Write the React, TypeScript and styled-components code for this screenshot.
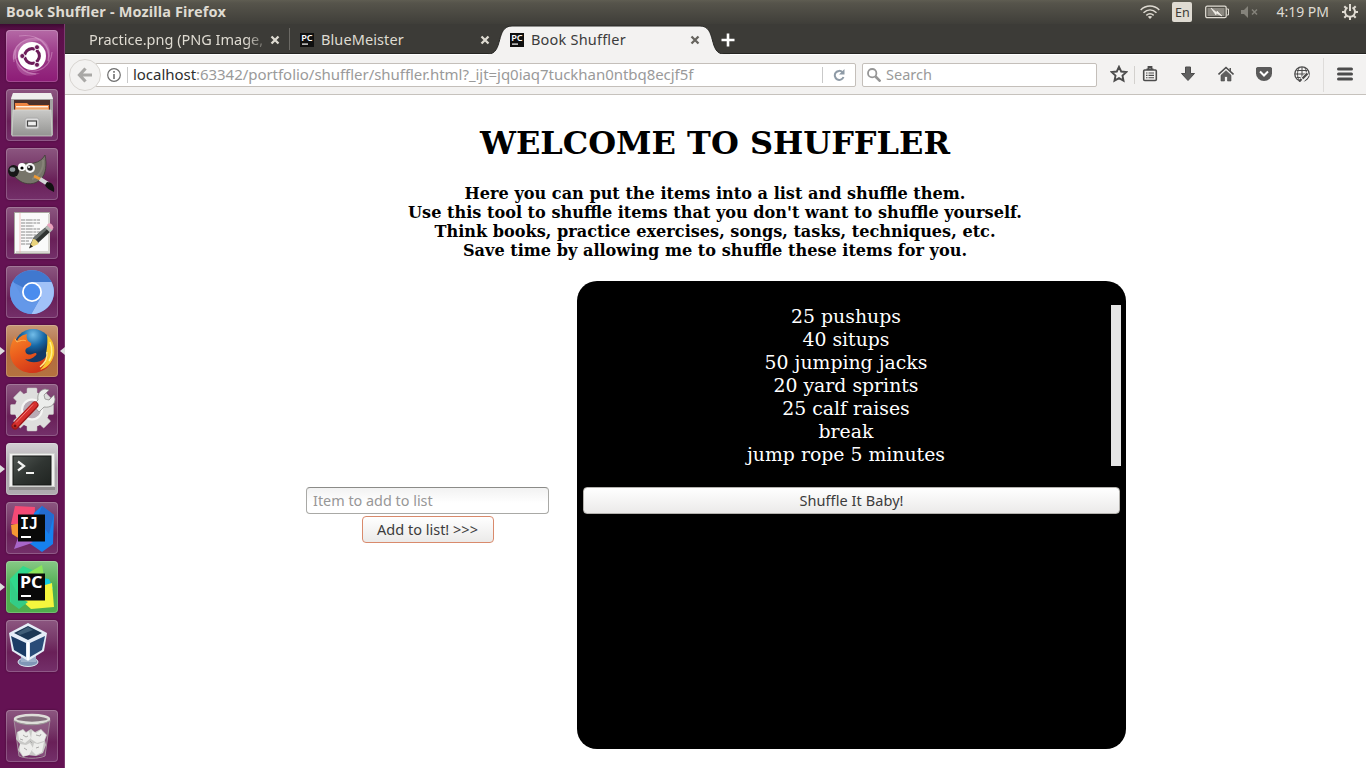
import React from 'react';
import styled, { createGlobalStyle } from 'styled-components';

const GlobalStyle = createGlobalStyle`
  * { box-sizing: border-box; }
  html, body { margin: 0; padding: 0; }
  body { width: 1366px; height: 768px; overflow: hidden; background: #fff; }
  svg { display: block; flex: none; }
`;

const uiFont = `'Noto Sans', 'Open Sans', sans-serif`;

const Desktop = styled.div`
  display: flex;
  flex-direction: column;
  width: 1366px;
  height: 768px;
  font-family: ${uiFont};
`;

const Label = styled.span<{ $size?: number; $spacing?: number }>`
  font-size: ${p => p.$size ?? 14.5}px;
  letter-spacing: ${p => p.$spacing ?? 0}px;
  white-space: nowrap;
`;

/* ---------- top panel ---------- */

const TopPanel = styled.header`
  display: flex;
  align-items: center;
  justify-content: space-between;
  flex: none;
  height: 24px;
  padding: 0 8px 0 6px;
  color: #dfdbd2;
  background: linear-gradient(#5f5d52 0, #56544b 3px, #3f3e39 24px);
`;

const WindowTitle = styled(Label)`
  margin-bottom: 2px;
  font-weight: 700;
  line-height: 22px;
`;

const Indicators = styled.div`
  display: flex;
  align-items: center;
  height: 24px;
`;

const Language = styled.div`
  width: 20px;
  height: 20px;
  margin: 0 13px 0 12px;
  border-radius: 2px;
  background: #dfdbd2;
  color: #3c3b37;
  font-size: 12.5px;
  line-height: 21px;
  text-align: center;
`;

const Clock = styled(Label)`
  margin: 0 13px 0 17px;
  line-height: 24px;
`;

/* ---------- launcher ---------- */

const Workspace = styled.div`
  display: flex;
  flex: 1;
  min-height: 0;
`;

const Launcher = styled.nav`
  display: flex;
  flex-direction: column;
  gap: 7px;
  flex: none;
  width: 65px;
  padding: 6px 7px 6px 6px;
  background: linear-gradient(#3d0932 0, #5c0f4a 6px, #641253 60px, #641253 100%);
  border-right: 1px solid #7d3b70;
`;

const Tile = styled.div<{ $bg?: string; $last?: boolean }>`
  position: relative;
  width: 52px;
  height: 52px;
  margin-top: ${p => (p.$last ? 'auto' : '0')};
  border-radius: 4px;
  background: ${p => p.$bg ?? 'linear-gradient(#8c5680 0, #763768 40%, #692058 62%, #74306a 100%)'};
  box-shadow: inset 0 0 0 1px rgba(255, 255, 255, 0.2), 0 0 2px rgba(30, 0, 20, 0.5);
`;

const Pip = styled.i<{ $right?: boolean }>`
  position: absolute;
  top: 22px;
  ${p => (p.$right ? 'right: -7px; border-right: 5px solid #dedede;' : 'left: -6px; border-left: 5px solid #dedede;')}
  border-top: 4px solid transparent;
  border-bottom: 4px solid transparent;
`;

const Icon52 = ({ children }: { children: React.ReactNode }) => (
  <svg width="52" height="52" viewBox="0 0 52 52">{children}</svg>
);

const monoText = { fontFamily: "'DejaVu Sans Mono', monospace", fontWeight: 700 } as const;

const DashIcon = () => (
  <Icon52>
    <g fill="none" stroke="#e9b9dd" strokeWidth="1.2" opacity=".4">
      <path d="M8 32C5 15 20 5 35 10M13 6C32 3 46 15 42 31M46 22c-1 14-13 22-25 18M10 19c-4 14 8 25 20 25" />
    </g>
    <path d="M7 30C5 15 19 5 36 11 24 9 14 16 13 27zM28 7c13 1 20 14 14 26 1-12-2-19-14-26zM10 28c3 10 12 16 24 15C20 50 9 43 10 28z" fill="#f1c4e6" opacity=".25" />
    <circle cx="26" cy="26" r="14" fill="#fff" />
    <circle cx="26" cy="26" r="7.3" fill="none" stroke="#6c1b59" strokeWidth="3.2" />
    <g stroke="#fff" strokeWidth="1.5"><path d="M26 26l5 9M26 26l5-9M26 26H15" /></g>
    <circle cx="26" cy="26" r="5.6" fill="#fff" />
    <g fill="#6c1b59" stroke="#fff" strokeWidth=".8"><circle cx="16.3" cy="26" r="2.5" /><circle cx="31" cy="17.2" r="2.5" /><circle cx="31" cy="34.8" r="2.5" /></g>
  </Icon52>
);

const FilesIcon = () => (
  <Icon52>
    <defs><linearGradient id="fl" x2="0" y2="1"><stop stopColor="#c9c9c7" /><stop offset="1" stopColor="#949492" /></linearGradient></defs>
    <path d="M7 4h38l2 5v37H5V9z" fill="#a5a5a3" />
    <path d="M7 4h38l2 6H5z" fill="#efefed" />
    <path d="M8 11h36v12H8z" fill="#4b302b" />
    <path d="M9 14h12l2 2h20v7H9z" fill="#ef8541" /><path d="M10 17h32v1.5H10z" fill="#fff2e2" /><path d="M10 19.5h32v1.2H10z" fill="#f3c38e" />
    <path d="M7 21h38l1 26H6z" fill="url(#fl)" stroke="#d8d8d6" strokeWidth=".7" />
    <rect x="19" y="29" width="14" height="11" rx="2" fill="#ddd" stroke="#aaa" />
    <rect x="21.5" y="32" width="9" height="5" fill="#eee" stroke="#444" strokeWidth="1.2" />
  </Icon52>
);

const GimpIcon = () => (
  <Icon52>
    <path d="M6 21c5 0 7-3 10-5 6-2 9 0 12-1 5-1 9-4 11-8 2 9 1 19-4 24-6 6-15 6-21 2-3-2-5-4-8-7z" fill="#77756a" stroke="#3f3d36" strokeWidth=".8" />
    <path d="M37 12c1 8-3 16-11 19" stroke="#969486" strokeWidth="2" fill="none" opacity=".5" />
    <ellipse cx="7.500" cy="23" rx="5.500" ry="6" fill="#171717" /><ellipse cx="6.500" cy="21.500" rx="2.800" ry="2.300" fill="#8c969a" />
    <circle cx="16" cy="19" r="4" fill="#fff" /><circle cx="16" cy="20" r="1.600" /><circle cx="24" cy="20" r="5" fill="#f4f4f4" /><circle cx="24" cy="20" r="2.800" fill="#222" /><circle cx="23" cy="19" r="1" fill="#fff" />
    <path d="M28 28l10 5" stroke="#ed9a35" strokeWidth="2.600" /><path d="M34 31l8 5" stroke="#d4d6d7" strokeWidth="4" />
    <path d="M41 34c5 0 8 4 7 10-4-2-8-4-9-7z" fill="#111" />
  </Icon52>
);

const EditorIcon = () => (
  <Icon52>
    <path d="M8.500 5.500h35v41h-35z" fill="#fafafa" stroke="#a8a69f" strokeWidth="1" />
    <path d="M10 45h33V7" fill="none" stroke="#d8d7d2" strokeWidth="2" />
    <path d="M14 6v40" stroke="#eeb0b0" strokeWidth=".7" />
    <path d="M15 13h19M15 16h19M15 19h13M15 22h19M15 25h19M15 28h17M15 31h12M15 34h8M15 37h13" stroke="#8a8a8a" strokeWidth="1.2" strokeDasharray="4 .7 7 .7 3 .7" />
    <path d="M24 38l4-8 13-11 4 5-13 12z" fill="#303432" /><path d="M27 31l14-12 2 1.600L28.500 34z" fill="#6d7371" />
    <path d="M23.500 41l3.500-9c2 0 5 2 5.500 5z" fill="#e9d37c" /><path d="M23 41.500l1.500-4 2.500 2z" fill="#222" />
    <path d="M39 20.500l3-3 5 5-3 3z" fill="#b6b9b5" /><path d="M41 18c3-4 6 0 6.500 3l-2 2z" fill="#eaa2bd" />
  </Icon52>
);

const ChromiumIcon = () => (
  <Icon52>
    <circle cx="26" cy="26" r="22" fill="#6094e4" />
    <path d="M26 26L6.500 16A22 22 0 0 1 45.500 16z" fill="#4078cf" />
    <path d="M26 16h19.500a22 22 0 0 1-20 32l9.500-17z" fill="#a1c2f8" />
    <path d="M7 15l10 17a10 10 0 0 0 17.500 0L25 48A22 22 0 0 1 7 15z" fill="#6498e9" />
    <circle cx="26" cy="26" r="10" fill="#fff" /><circle cx="26" cy="26" r="8.200" fill="#4a8cee" />
  </Icon52>
);

const FirefoxIcon = () => (
  <Icon52>
    <defs>
      <radialGradient id="gl" cx=".5" cy=".15"><stop stopColor="#72bde9" /><stop offset=".6" stopColor="#1667a5" /><stop offset="1" stopColor="#123966" /></radialGradient>
      <linearGradient id="fx" x2=".6" y2="1"><stop stopColor="#f78c2a" /><stop offset=".5" stopColor="#ea5b1c" /><stop offset="1" stopColor="#cf3319" /></linearGradient>
    </defs>
    <circle cx="27" cy="23" r="19" fill="url(#gl)" />
    <path d="M43 14c4 5 6 10 5 15-1 11-10 19-22 19-12 0-22-9-22-21 0-6 2-10 4-14l1-2c0 3 1 4 2 5 2-4 5-6 10-7-1 3 0 5 1 7l3 2c1 2-1 4-4 5-2 1-2 3-1 5 3 3 6 1 9 0 2 0 2 2 0 3-3 3-7 4-10 3 5 5 15 4 20-1 4-6 5-13 4-19z" fill="url(#fx)" />
    <path d="M41 10c7 6 8 13 7 20-2 8-7 13-14 15 6-6 8-12 8-18l-2 3c1-8 2-13 1-20z" fill="#f9c92f" />
    <path d="M44 17c3 7 2 15-1 19M41 27c1 7-3 12-7 15" stroke="#fff18b" strokeWidth="1.500" fill="none" />
    <path d="M9 14l2 3c4-2 8-2 9-1" fill="none" stroke="#ffbb5a" strokeWidth="1" />
  </Icon52>
);

const SettingsIcon = () => (
  <Icon52>
    <g fill="#dededd" stroke="#c4c4c2" strokeWidth=".5">
      {[0, 45, 90, 135].map(a => <rect key={a} x="21" y="4" width="10" height="43" rx="1" transform={`rotate(${a} 26 25.500)`} />)}
      <circle cx="26" cy="25.500" r="17.500" stroke="none" />
    </g>
    <circle cx="26" cy="25.500" r="9" fill="#b9abb5" /><circle cx="26" cy="25.500" r="10" fill="none" stroke="#f5f5f4" strokeWidth="2" />
    <path d="M27 21l5-5c-1-6 2-10 7-11l4 1-5 5 1 4 4 1 5-5 1 4c0 6-5 9-11 8l-5 5z" fill="#ecedeb" stroke="#8e8e8b" strokeWidth=".8" />
    <path d="M9 42L29 21" stroke="#9f1717" strokeWidth="7" strokeLinecap="round" /><path d="M9 41.500L29 20.500" stroke="#d6302e" strokeWidth="5" strokeLinecap="round" /><path d="M10 38.500L27 20.500" stroke="#f0827c" strokeWidth="1" />
    <circle cx="9" cy="42" r="1.500" fill="#6b1010" />
  </Icon52>
);

const TerminalIcon = () => (
  <Icon52>
    <defs><linearGradient id="tm" x2="1" y2="1"><stop stopColor="#505652" /><stop offset=".5" stopColor="#303532" /><stop offset="1" stopColor="#202421" /></linearGradient></defs>
    <path d="M3 10h46v34H3z" fill="#d0d1cf" /><path d="M4 11h44v32H4z" fill="#f1f1ef" /><path d="M3 44h46v3H3z" fill="#8e8b8c" />
    <rect x="7" y="13" width="38" height="29" fill="url(#tm)" stroke="#171917" />
    <path d="M12 18.500l6 4.500-6 4.500M20 30h8" fill="none" stroke="#f3f3f2" strokeWidth="2.200" />
  </Icon52>
);

const IntelliJIcon = () => (
  <Icon52>
    <path d="M9 4l20 1-1 20-23-3z" fill="#f54a75" /><path d="M5 23l10-2 2 18-11-7z" fill="#f69833" />
    <path d="M28 11l8-7 12 9-1 29-11 8-13-9z" fill="#1681ee" /><path d="M36 4l12 9-5 19-12-15z" fill="#246bd0" />
    <path d="M8 47l5-14 14 7-4 2z" fill="#a866c9" />
    <path d="M12 12.500h27v27H12z" fill="#090909" />
    <text x="14" y="27" fill="#fff" fontSize="15.500" textLength="18" lengthAdjust="spacingAndGlyphs" style={monoText}>IJ</text><path d="M15 34h10v2H15z" fill="#fff" />
  </Icon52>
);

const PyCharmIcon = () => (
  <Icon52>
    <path d="M4 18L17 5l16 7-12 28-9 6-8-5z" fill="#30d98c" /><path d="M22 12L36 4l4 22-20 7z" fill="#8ce65a" />
    <path d="M36 17l7 1 4 9-6 8z" fill="#15c9df" /><path d="M39 24l7-2 2 24-23 2-9-8z" fill="#f5f63e" /><path d="M4 19l10 18 8 4-9 7-8-6z" fill="#33cc85" />
    <path d="M12 12.500h27v27H12z" fill="#090909" />
    <text x="14" y="27" fill="#fff" fontSize="16" textLength="22.500" lengthAdjust="spacingAndGlyphs" style={{ fontFamily: uiFont, fontWeight: 700 }}>PC</text><path d="M15 34h10v2H15z" fill="#fff" />
  </Icon52>
);

const VirtualBoxIcon = () => (
  <Icon52>
    <ellipse cx="22" cy="42" rx="10" ry="4.500" fill="#8096b7" stroke="#dce5ef" /><path d="M15 34h15v8H15z" fill="#9eb0ca" />
    <path d="M3 13L22 3l19 10-3 18-16 10L6 31z" fill="#e4edf7" /><path d="M8 13l14-7 14 7-14 7z" fill="#1b3855" />
    <path d="M5 16l15 7v14L8 30z" fill="#1b3c65" /><path d="M24 23l15-7-3 14-12 7z" fill="#294c78" /><path d="M11 13l11-6 5 3-13 5z" fill="#537288" opacity=".65" /><path d="M22 22v18" stroke="#fff" strokeWidth="2" />
  </Icon52>
);

const TrashIcon = () => (
  <Icon52>
    <path d="M8 10h36l-5 36H13z" fill="#c7b8c2" opacity=".25" />
    <path d="M8 10l5 36c7 3 19 3 26 0l5-36" fill="none" stroke="#a48e9d" strokeWidth="1" />
    <path d="M11 22l6-3 3 3 5-3 4 3 6-3 6 6-2 5 1 5-3 8-7 3-7-1-6 2-5-7 2-6-4-5z" fill="#c9c9c7" />
    <g fill="#ededeb">
      <path d="M12 22l5-2 3 3 3-2 2 7-6 5-6-3zM26 21l4 2 5-3 5 5-2 6-7 2-6-4zM14 34l6 1 4-2 3 5-4 7-6 1-3-5zM28 33l4 1 6-2-2 10-6 3-4-4z" />
    </g>
    <path d="M17 25l3 2 2-1M30 25l4 1 1-2M18 38l3 2M30 38l3-1M24 31l2 2M14 29l3 1" stroke="#aaa9a8" fill="none" />
    <ellipse cx="26" cy="9" rx="17" ry="4" fill="#84707d" stroke="#deded9" strokeWidth="2.500" /><path d="M9 11c7 5 27 5 34 0" stroke="#9b9b97" fill="none" />
  </Icon52>
);

/* ---------- browser window ---------- */

const Browser = styled.main`
  display: flex;
  flex-direction: column;
  flex: 1;
  min-width: 0;
`;

const TabStrip = styled.div`
  position: relative;
  display: flex;
  align-items: center;
  flex: none;
  height: 30px;
  background: #3c3b37;
  border-bottom: 1px solid #252522;
`;

const Tab = styled.div<{ $active?: boolean; $width: number; $pad: number }>`
  position: relative;
  display: flex;
  align-items: center;
  justify-content: space-between;
  width: ${p => p.$width}px;
  height: 30px;
  padding: 2px 9px 0 ${p => p.$pad}px;
  color: ${p => (p.$active ? '#3c3c3c' : '#dfdbd2')};
`;

const TabShape = styled.svg`
  position: absolute;
  left: -11px;
  top: 1px;
`;

const TabTitle = styled(Label)<{ $fade?: boolean; $grow?: boolean }>`
  position: relative;
  flex: ${p => (p.$grow ? 1 : 'none')};
  margin-bottom: 2px;
  line-height: 22px;
  ${p => p.$fade && 'mask-image: linear-gradient(90deg, #000 90%, rgba(0, 0, 0, 0.3) 100%);'}
`;

const Divider = styled.i<{ $h: number; $color: string; $gap?: number }>`
  flex: none;
  width: 1px;
  height: ${p => p.$h}px;
  margin-left: ${p => p.$gap ?? 0}px;
  background: ${p => p.$color};
`;

const FaviconArt = styled.svg`
  position: relative;
  margin-right: 7px;
`;

const Favicon = () => (
  <FaviconArt width="14" height="14" viewBox="0 0 14 14">
    <path d="M0 0h14v14H0z" fill="#101010" />
    <text x="1.200" y="7.500" fill="#fff" fontSize="8.500" textLength="11.500" lengthAdjust="spacingAndGlyphs" style={{ fontFamily: uiFont, fontWeight: 600 }}>PC</text>
    <path d="M2 10.500h6v1.200H2z" fill="#fff" />
  </FaviconArt>
);

const CloseArt = styled.svg`
  position: relative;
`;

const Close = ({ color = '#dfdbd2' }: { color?: string }) => (
  <CloseArt width="10" height="10" viewBox="0 0 10 10">
    <path d="M1.500 1.500l7 7M8.500 1.500l-7 7" stroke={color} strokeWidth="2.300" />
  </CloseArt>
);

const NewTab = styled.svg`
  margin: 2px 0 0 12px;
`;

const NavBar = styled.div`
  display: flex;
  align-items: center;
  flex: none;
  height: 41px;
  padding-left: 4px;
  background: #f3f2f1;
  border-top: 1px solid #fff;
  border-bottom: 1px solid #c6c2bd;
`;

const BackButton = styled.div`
  position: relative;
  z-index: 1;
  display: grid;
  place-items: center;
  width: 32px;
  height: 32px;
  border: 1px solid #d8d5d1;
  border-radius: 50%;
  background: #f3f2f1;
`;

const Field = styled.div<{ $width: number; $url?: boolean }>`
  display: flex;
  align-items: center;
  width: ${p => p.$width}px;
  height: 24px;
  margin-left: ${p => (p.$url ? -6 : 6)}px;
  padding-left: ${p => (p.$url ? 11 : 4)}px;
  border: 1px solid #c4bfba;
  border-radius: 2px;
  background: #fff;
  color: #9a9a9a;
`;

const UrlText = styled(Label)`
  flex: 1;
  margin: 0 0 2px 5px;
  line-height: 20px;
  b { font-weight: 400; color: #2e2e2e; }
`;

const SearchHint = styled(Label)`
  margin: 0 0 2px 5px;
  line-height: 20px;
`;

const Reload = styled.svg`
  margin: 0 10px;
`;

const Tools = styled.div`
  display: flex;
  align-items: center;
  flex: 1;
  padding-left: 13px;
`;

const Tool = styled.div<{ $before?: number }>`
  margin: -1px 0 0 ${p => p.$before ?? 0}px;
`;

const toolStroke = { fill: 'none', stroke: '#4c4c4c' };

/* ---------- page ---------- */

const Page = styled.section`
  flex: 1;
  padding-top: 29px;
  padding-right: 1px;
  background: #fff;
  color: #000;
  font-family: 'DejaVu Serif', serif;
  text-align: center;
`;

const Heading = styled.h1`
  margin: 0;
  font-size: 32px;
  line-height: 38px;
  font-weight: 700;
`;

const Intro = styled.h4`
  margin: 22px 0 0;
  font-size: 16.13px;
  line-height: 19px;
  font-weight: 700;
`;

const Columns = styled.div`
  display: flex;
  align-items: flex-start;
  gap: 28px;
  margin: 21px 0 0 241px;
`;

const Form = styled.div`
  display: flex;
  flex-direction: column;
  align-items: center;
  gap: 2px;
  width: 243px;
  padding-top: 206px;
`;

const Input = styled.input`
  width: 243px;
  height: 27px;
  padding: 0 6px;
  border: 1px solid #a9a9a6;
  border-top-color: #8b8b88;
  border-radius: 4px;
  background: linear-gradient(#f2f2f2, #fff 60%);
  font: 14.4px ${uiFont};
  &::placeholder { color: #979797; opacity: 1; }
`;

const Button = styled.button<{ $width: number; $focus?: boolean }>`
  width: ${p => p.$width}px;
  height: 27px;
  padding: 0;
  border: 1px solid ${p => (p.$focus ? '#d98a6c' : '#b4b2ae')};
  border-radius: 4px;
  background: linear-gradient(#fff, #ebeae9);
  color: #3c3c3c;
  font-family: ${uiFont};
  line-height: 24px;
`;

const ListBox = styled.div`
  display: flex;
  flex-direction: column;
  align-items: center;
  width: 549px;
  height: 468px;
  padding-top: 24px;
  border-radius: 20px;
  background: #000;
`;

const Scroller = styled.div`
  display: flex;
  width: 539px;
  height: 161px;
  margin-bottom: 21px;
`;

const Items = styled.ul`
  flex: 1;
  margin: 0;
  padding: 0 1px 0 0;
  list-style: none;
  color: #fff;
  font-size: 18.85px;
  line-height: 23px;
`;

const ScrollTrack = styled.div`
  width: 10px;
  background: #e5e5e5;
`;

const Speaker = styled.svg`
  margin-left: 12px;
`;

const items = ['25 pushups', '40 situps', '50 jumping jacks', '20 yard sprints', '25 calf raises', 'break', 'jump rope 5 minutes'];

export default function App() {
  return (
    <Desktop>
      <GlobalStyle />
      <TopPanel>
        <WindowTitle $spacing={0.15}>Book Shuffler - Mozilla Firefox</WindowTitle>
        <Indicators>
          <svg width="20" height="16" viewBox="0 0 20 16" fill="none" stroke="#dfdbd2" strokeWidth="1.500">
            <path d="M.7 6C6 .8 14 .8 19.300 6M3.500 8.700c4-3.600 9-3.600 13 0M6.300 11.400c2.300-2 5.100-2 7.400 0" /><path d="M7.800 12.800L10 15l2.200-2.200c-1.300-1-3.100-1-4.400 0z" fill="#dfdbd2" stroke="none" />
          </svg>
          <Language>En</Language>
          <svg width="24" height="14" viewBox="0 0 24 14">
            <rect x=".7" y="1.200" width="20.500" height="11.500" rx="1.500" fill="none" stroke="#dfdbd2" strokeWidth="1.300" /><path d="M22 4h1.500v6H22" fill="none" stroke="#dfdbd2" />
            <path d="M2.500 3h17v8h-17z" fill="#8b8880" /><path d="M6 3l6 5v-2l5 5-6-3v2z" fill="#f1eee6" stroke="#f1eee6" strokeWidth=".7" />
          </svg>
          <Speaker width="18" height="14" viewBox="0 0 18 14">
            <path d="M0 5h3l4-4v12L3 9H0z" fill="#85837b" /><path d="M11 4.500l5 5M16 4.500l-5 5" stroke="#85837b" strokeWidth="1.500" />
          </Speaker>
          <Clock $size={14}>4:19 PM</Clock>
          <svg width="16" height="16" viewBox="0 0 16 16" stroke="#dfdbd2" fill="none">
            <path d="M5.500 3.500a5 5 0 1 0 5 0" strokeWidth="2" /><path d="M8 0v7" strokeWidth="2" />
            <path d="M2.300 2.300l2 2M13.700 2.300l-2 2M0 8h3M13 8h3M2.300 13.700l2-2M13.700 13.700l-2-2M8 13v3" strokeWidth="2" />
          </svg>
        </Indicators>
      </TopPanel>
      <Workspace>
        <Launcher>
          <Tile $bg="linear-gradient(#b56aa6 0, #9c3a89 45%, #8d1b76 100%)"><DashIcon /></Tile>
          <Tile><FilesIcon /></Tile>
          <Tile><GimpIcon /></Tile>
          <Tile><EditorIcon /></Tile>
          <Tile><ChromiumIcon /></Tile>
          <Tile $bg="linear-gradient(#c79775, #b16c40 50%, #b5723f)"><Pip /><Pip $right /><FirefoxIcon /></Tile>
          <Tile><SettingsIcon /></Tile>
          <Tile $bg="linear-gradient(#d4d0d4, #aaa5aa 50%, #b0abb0)"><Pip /><TerminalIcon /></Tile>
          <Tile><IntelliJIcon /></Tile>
          <Tile $bg="linear-gradient(#87c986, #4fab50 50%, #4fae4d)"><Pip /><PyCharmIcon /></Tile>
          <Tile><VirtualBoxIcon /></Tile>
          <Tile $last><TrashIcon /></Tile>
        </Launcher>
        <Browser>
          <TabStrip>
            <Tab $width={224} $pad={24}><TabTitle $fade>Practice.png (PNG Image,</TabTitle><Close /></Tab>
            <Divider $h={22} $color="#6b6964" />
            <Tab $width={209} $pad={10}><Favicon /><TabTitle $grow $spacing={0.1}>BlueMeister</TabTitle><Close /></Tab>
            <Tab $active $width={210} $pad={11}>
              <TabShape width="242" height="30" viewBox="0 0 242 30">
                <path d="M0 29C16 29 7 1 24 1H212C229 1 220 29 236 29V30H0z" fill="#f3f2f1" stroke="#292926" strokeWidth="1" /><path d="M0 29h242v1H0z" fill="#f3f2f1" />
              </TabShape>
              <Favicon /><TabTitle $grow $spacing={0.2}>Book Shuffler</TabTitle><Close color="#66645f" />
            </Tab>
            <NewTab width="14" height="14" viewBox="0 0 14 14"><path d="M7 .5v13M.5 7h13" stroke="#fff" strokeWidth="2.600" /></NewTab>
          </TabStrip>
          <NavBar>
            <BackButton><svg width="16" height="16" viewBox="0 0 16 16" fill="none" stroke="#a9a8a6" strokeWidth="3.200"><path d="M8.500 1.500L2.500 8l6 6.500M3 8h12" /></svg></BackButton>
            <Field $url $width={761}>
              <svg width="14" height="14" viewBox="0 0 14 14" fill="none" stroke="#6e6e6e"><circle cx="7" cy="7" r="6.300" strokeWidth="1.200" /><path d="M7 6v5M7 3v1.700" strokeWidth="1.600" /></svg>
              <Divider $h={16} $color="#c9c9c9" $gap={6} />
              <UrlText $size={15} $spacing={-0.04}><b>localhost</b>:63342/portfolio/shuffler/shuffler.html?_ijt=jq0iaq7tuckhan0ntbq8ecjf5f</UrlText>
              <Divider $h={16} $color="#c9c9c9" />
              <Reload width="12" height="12" viewBox="0 0 12 12"><path d="M9.500 3.200A4.500 4.500 0 1 0 10.500 8" fill="none" stroke="#8e9aa6" strokeWidth="2" /><path d="M11.500 0v5.500H6z" fill="#8e9aa6" /></Reload>
            </Field>
            <Field $width={235}>
              <svg width="14" height="14" viewBox="0 0 14 14" fill="none" stroke="#969696"><circle cx="5.200" cy="5.200" r="4.200" strokeWidth="1.800" /><path d="M8.500 8.500l5 5" strokeWidth="2.600" /></svg>
              <SearchHint>Search</SearchHint>
            </Field>
            <Tools>
              <Tool><svg width="18" height="18" viewBox="0 0 18 18"><path {...toolStroke} strokeWidth="1.900" d="M9 1.800l2.200 4.700 5.100.6-3.800 3.500 1 5.100L9 13.200l-4.500 2.500 1-5.100-3.800-3.500 5.100-.6z" /></svg></Tool>
              <Divider $h={18} $color="#d3d1ce" $gap={6} />
              <Tool $before={7}><svg width="16" height="16" viewBox="0 0 16 16"><path d="M4.500 3.500h7M6.500 2.500V1h3v1.500" {...toolStroke} strokeWidth="1.800" /><rect x="1.700" y="4" width="12.600" height="10.500" rx="1" fill="#f3f2f1" stroke="#4c4c4c" strokeWidth="1.600" /><path d="M4 7h1.500M6.500 7H12M4 9.400h1.500M6.500 9.400H12M4 11.800h1.500M6.500 11.800H12" {...toolStroke} strokeWidth="1.100" /></svg></Tool>
              <Tool $before={22}><svg width="16" height="16" viewBox="0 0 16 16"><path d="M5.500 1h5v6.500H14.500L8 14.500l-6.500-7h4z" fill="#606060" stroke="#4c4c4c" /></svg></Tool>
              <Tool $before={22}><svg width="16" height="16" viewBox="0 0 16 16"><path d="M.5 8.500L8 1.500l7.500 7" {...toolStroke} strokeWidth="1.600" /><path d="M3 9.200l5-4.500 5 4.500V15H9.500v-4.500h-3V15H3z" fill="#606060" stroke="#4c4c4c" strokeWidth=".6" /><path d="M11.500 2H13v4l-1.500-1.500z" fill="#555" /></svg></Tool>
              <Tool $before={22}><svg width="16" height="16" viewBox="0 0 16 16"><path d="M1.500 1h13l1.500 1v5.500a8 7.500 0 0 1-16 0V2z" fill="#5a5a5a" /><path d="M4 5.500l4 4 4-4" fill="none" stroke="#fff" strokeWidth="2" /></svg></Tool>
              <Tool $before={22}><svg width="16" height="16" viewBox="0 0 16 16"><circle cx="8" cy="8" r="7.200" {...toolStroke} strokeWidth="1.300" /><path d="M8 1v14M1 8h14M2.500 4.500h11M2.500 11.500h6M5 2c-2 4-2 8 0 12M11 2c1 2 1.500 4 1.500 6" {...toolStroke} strokeWidth="1" /><path d="M4 16l2-4 7-6 2.500 3-6 7z" fill="#f3f2f1" /><path d="M5 15.500l2.500-2.500M8.500 12.500l5-5" {...toolStroke} strokeWidth="2.400" /></svg></Tool>
              <Divider $h={34} $color="#dedcda" $gap={13} />
              <Tool $before={13}><svg width="16" height="14" viewBox="0 0 16 14"><path d="M1.500 2h13M1.500 7h13M1.500 12h13" {...toolStroke} strokeWidth="3" strokeLinecap="round" /></svg></Tool>
            </Tools>
          </NavBar>
          <Page>
            <Heading>WELCOME TO SHUFFLER</Heading>
            <Intro>
              Here you can put the items into a list and shuffle them.<br />
              Use this tool to shuffle items that you don't want to shuffle yourself.<br />
              Think books, practice exercises, songs, tasks, techniques, etc.<br />
              Save time by allowing me to shuffle these items for you.
            </Intro>
            <Columns>
              <Form>
                <Input placeholder="Item to add to list" />
                <Button $width={132} $focus><Label>Add to list! &gt;&gt;&gt;</Label></Button>
              </Form>
              <ListBox>
                <Scroller>
                  <Items>{items.map(item => <li key={item}>{item}</li>)}</Items>
                  <ScrollTrack />
                </Scroller>
                <Button $width={537}><Label $spacing={0.08}>Shuffle It Baby!</Label></Button>
              </ListBox>
            </Columns>
          </Page>
        </Browser>
      </Workspace>
    </Desktop>
  );
}
